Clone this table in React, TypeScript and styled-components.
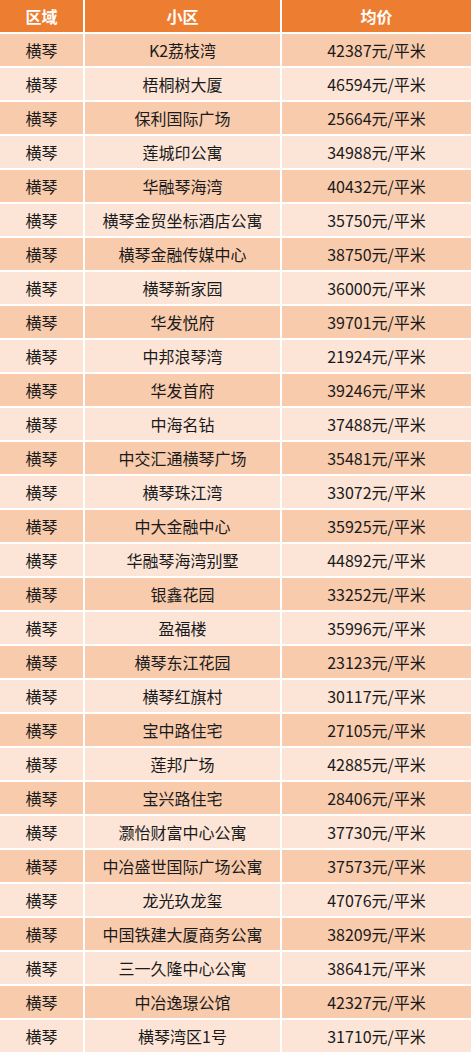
import styled, { createGlobalStyle } from "styled-components";

const GlobalStyle = createGlobalStyle`
  html, body {
    margin: 0;
    padding: 0;
    background: #ffffff;
  }
  body {
    font-family: "Noto Sans CJK SC", "Noto Sans", sans-serif;
  }
`

const rows: [string, string][] = [
  ["K2荔枝湾", "42387"],
  ["梧桐树大厦", "46594"],
  ["保利国际广场", "25664"],
  ["莲城印公寓", "34988"],
  ["华融琴海湾", "40432"],
  ["横琴金贸坐标酒店公寓", "35750"],
  ["横琴金融传媒中心", "38750"],
  ["横琴新家园", "36000"],
  ["华发悦府", "39701"],
  ["中邦浪琴湾", "21924"],
  ["华发首府", "39246"],
  ["中海名钻", "37488"],
  ["中交汇通横琴广场", "35481"],
  ["横琴珠江湾", "33072"],
  ["中大金融中心", "35925"],
  ["华融琴海湾别墅", "44892"],
  ["银鑫花园", "33252"],
  ["盈福楼", "35996"],
  ["横琴东江花园", "23123"],
  ["横琴红旗村", "30117"],
  ["宝中路住宅", "27105"],
  ["莲邦广场", "42885"],
  ["宝兴路住宅", "28406"],
  ["灏怡财富中心公寓", "37730"],
  ["中冶盛世国际广场公寓", "37573"],
  ["龙光玖龙玺", "47076"],
  ["中国铁建大厦商务公寓", "38209"],
  ["三一久隆中心公寓", "38641"],
  ["中冶逸璟公馆", "42327"],
  ["横琴湾区1号", "31710"],
]

export default function App() {
  return (
    <>
      <GlobalStyle />
      <Table>
        <HeadCell>区域</HeadCell>
        <HeadCell>小区</HeadCell>
        <HeadCell>均价</HeadCell>
        {rows.map(([name, price], i) => (
          <Row key={i} $odd={i % 2 === 0}>
            <Cell>横琴</Cell>
            <Cell>{name}</Cell>
            <Cell>{price}元/平米</Cell>
          </Row>
        ))}
      </Table>
    </>
  )
}

const Table = styled.div`
  width: 471px;
  display: grid;
  grid-template-columns: 83px 195px 1fr;
  grid-auto-rows: 32px;
  gap: 2px;
  background: #ffffff;
`

const HeadCell = styled.div`
  display: flex;
  align-items: center;
  justify-content: center;
  background: #ed7d31;
  color: #ffffff;
  font-size: 16px;
  font-weight: 700;
`

const Row = styled.div<{ $odd: boolean }>`
  display: contents;
  & > div {
    background: ${(p) => (p.$odd ? "#f8cbad" : "#fce4d6")};
  }
`

const Cell = styled.div`
  display: flex;
  align-items: center;
  justify-content: center;
  color: #1a1a1a;
  font-size: 16px;
  white-space: nowrap;
`
